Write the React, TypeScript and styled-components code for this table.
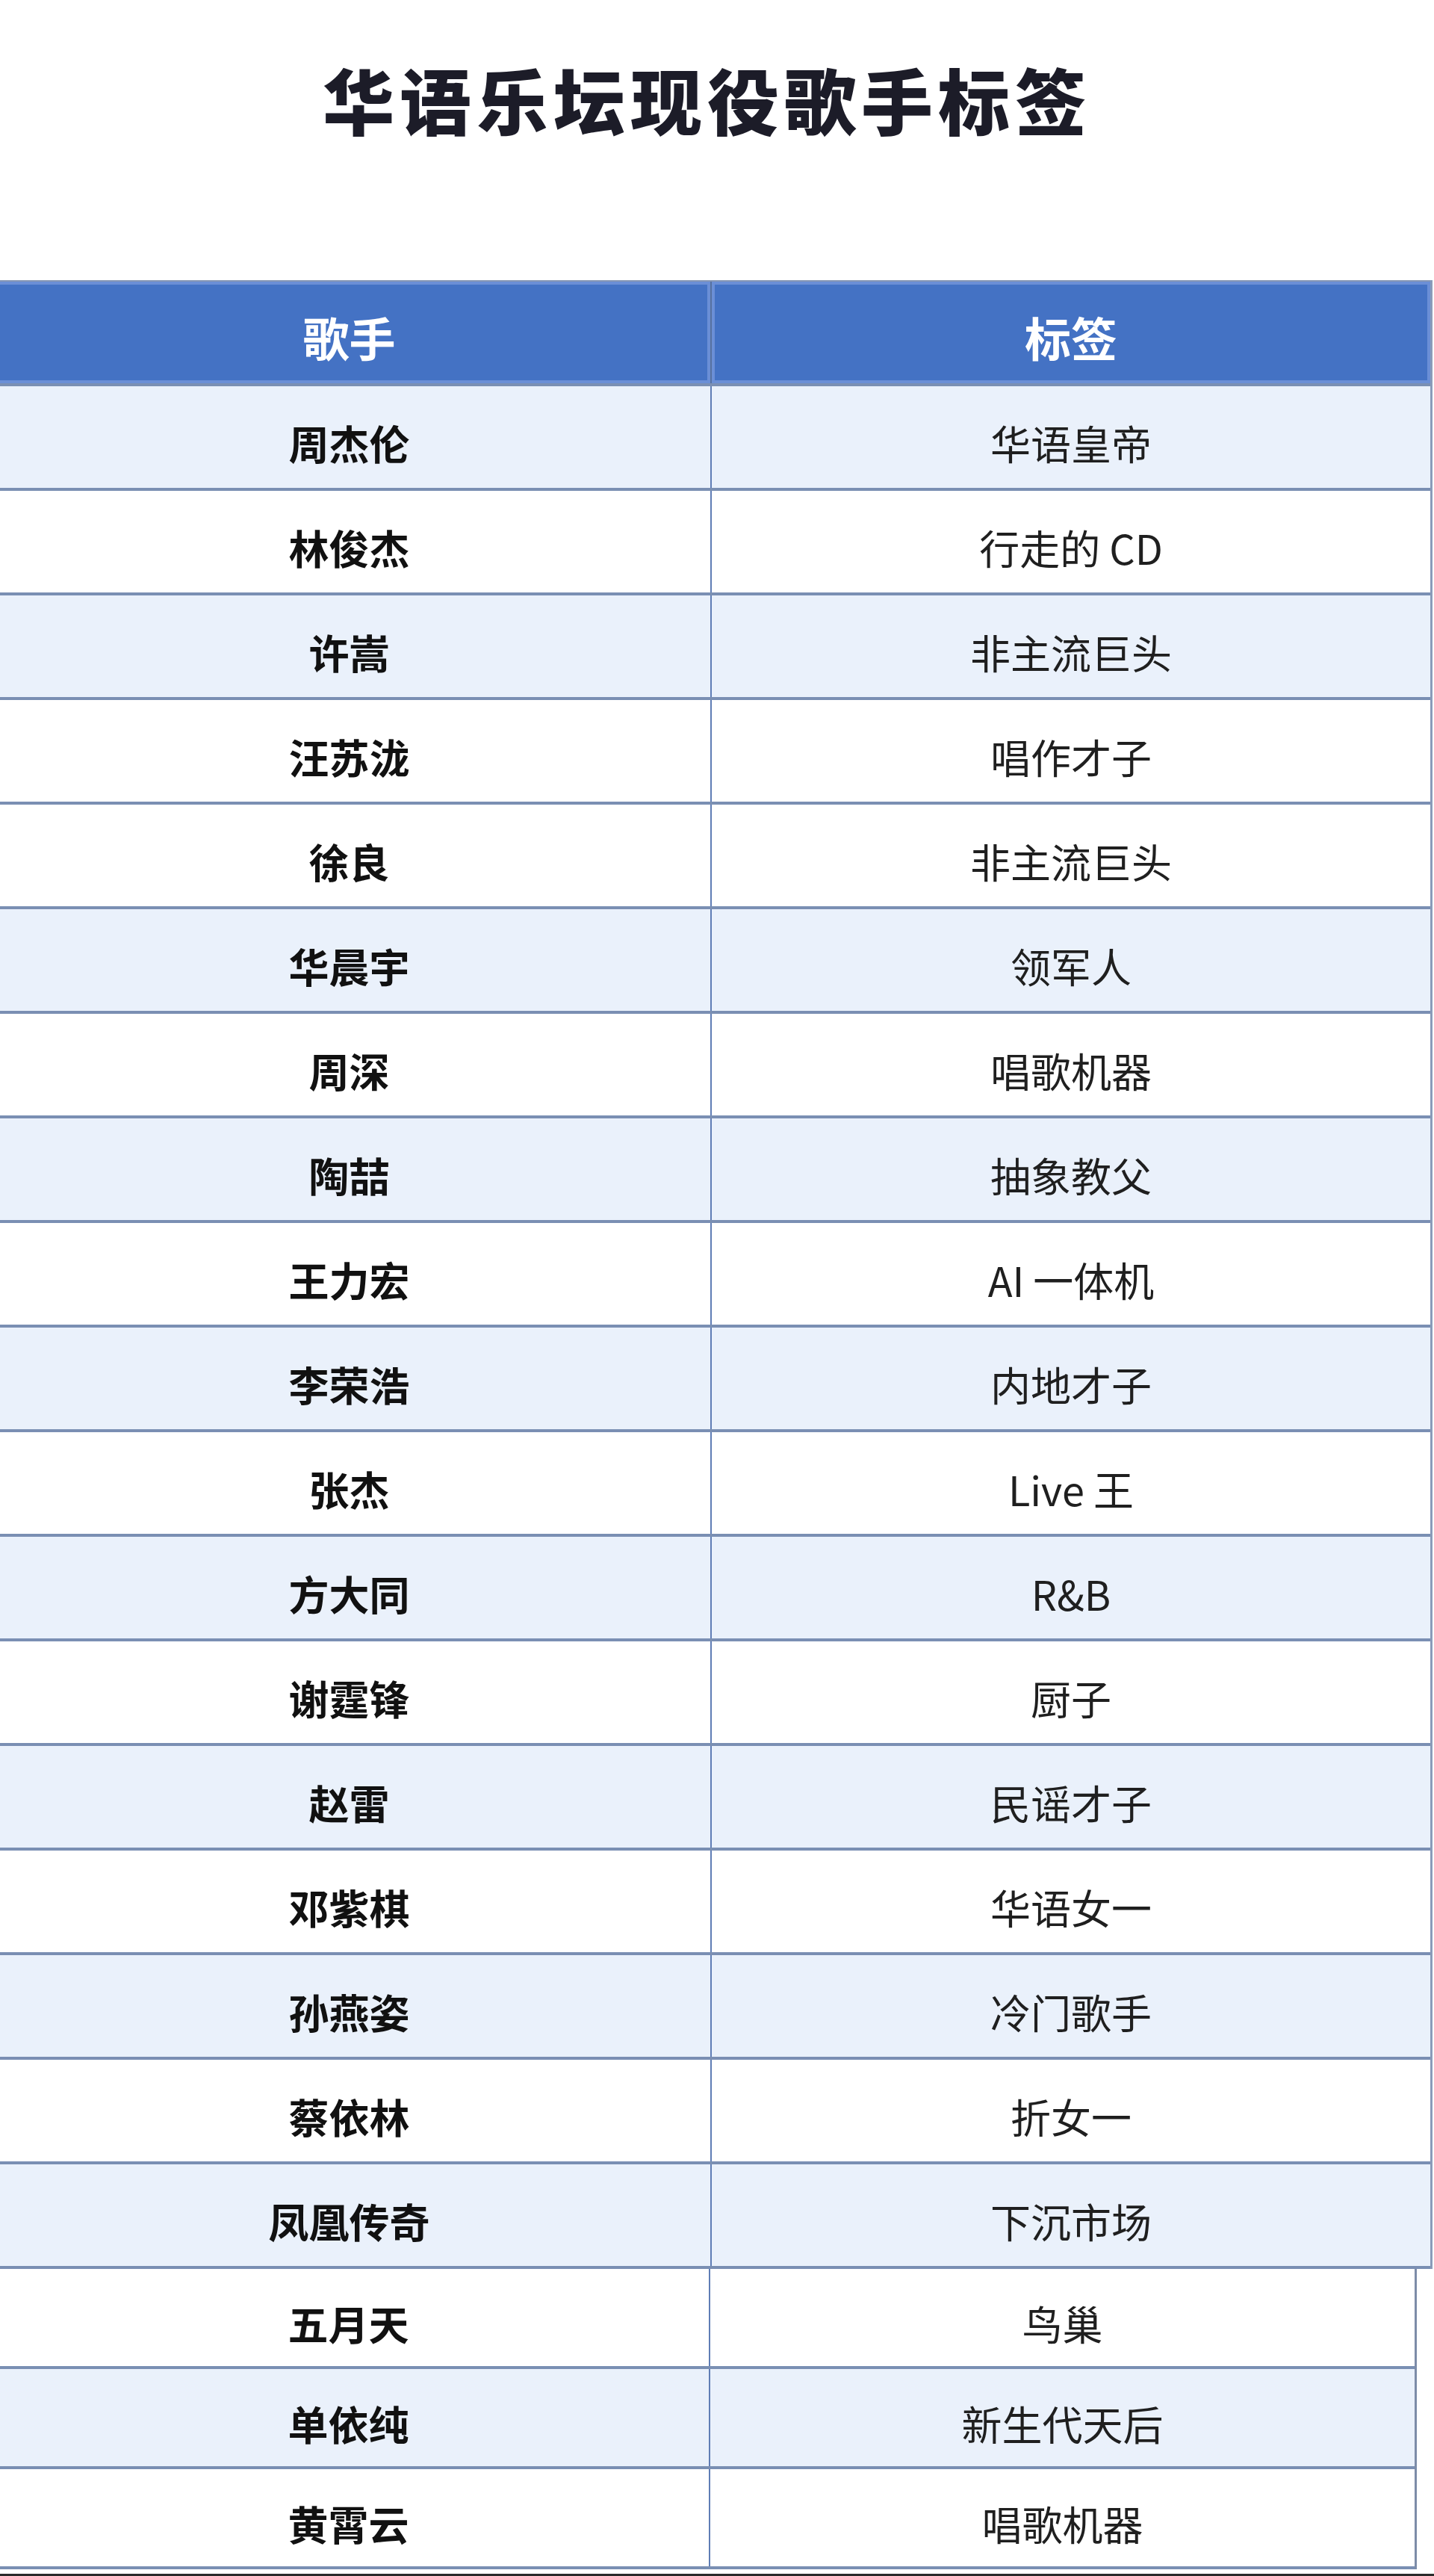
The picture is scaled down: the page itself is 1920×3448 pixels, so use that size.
import React from 'react';
import styled, { createGlobalStyle } from 'styled-components';

const GlobalStyle = createGlobalStyle`
  html, body {
    margin: 0;
    padding: 0;
    background: #fff;
  }
  body {
    width: 1920px;
    overflow-x: hidden;
    font-family: "Noto Sans CJK SC", "Noto Sans", sans-serif;
  }
`;

const Page = styled.div`
  width: 1920px;
  height: 3448px;
  overflow: hidden;
  background: #fff;
  display: flex;
  flex-direction: column;
`;

// the sheet is a little wider than the screen and pushed left, as in the shot
const Sheet = styled.div`
  margin-left: -16px;
  width: 1934px;
  display: flex;
  flex-direction: column;
`;

const Title = styled.h1`
  margin: 0;
  height: 375px;
  box-sizing: border-box;
  padding: 72px 8px 0 0;
  text-align: center;
  font-size: 96px;
  line-height: 120px;
  font-weight: 900;
  letter-spacing: 7px;
  color: #1c1c28;
`;

const Table = styled.div<{ $width: number; $last?: boolean }>`
  width: ${(p) => p.$width}px;
  display: flex;
  flex-direction: column;
  border-right: 3px solid ${(p) => (p.$last ? '#7d8ca8' : '#8a9bb9')};
  box-sizing: border-box;
`;

const Row = styled.div<{ $shade?: boolean; $height: number; $cols: string }>`
  display: grid;
  grid-template-columns: ${(p) => p.$cols};
  height: ${(p) => p.$height}px;
  box-sizing: border-box;
  background: ${(p) => (p.$shade ? '#eaf1fb' : '#ffffff')};
  border-bottom: 4px solid #7a8fb3;
`;

const HeadRow = styled.div<{ $cols: string }>`
  display: grid;
  grid-template-columns: ${(p) => p.$cols};
  height: 142px;
  box-sizing: border-box;
  background: #4472c4;
  border-top: 2px solid #8596b5;
  border-bottom: 4px solid #7a8fb3;
`;

const HeadCell = styled.div`
  display: flex;
  align-items: center;
  justify-content: center;
  padding-top: 12px;
  box-sizing: border-box;
  box-shadow: inset 0 0 0 4px #6b8fd6;
  color: #fff;
  font-size: 62px;
  font-weight: 700;
  & + & {
    border-left: 2px solid #56719f;
  }
`;

const Cell = styled.div<{ $bold?: boolean }>`
  display: flex;
  align-items: center;
  justify-content: center;
  padding-top: 14px;
  box-sizing: border-box;
  font-size: 54px;
  font-weight: ${(p) => (p.$bold ? 700 : 400)};
  color: ${(p) => (p.$bold ? '#111' : '#1f1f1f')};
  white-space: nowrap;
  & + & {
    border-left: 2px solid #5f7db5;
  }
`;

const BottomLine = styled.div`
  margin-top: 6px;
  height: 4px;
  background: #2a2a2a;
`;

type Singer = { name: string; tag: string; shade: boolean };

const mainRows: Singer[] = [
  { name: '周杰伦', tag: '华语皇帝', shade: true },
  { name: '林俊杰', tag: '行走的 CD', shade: false },
  { name: '许嵩', tag: '非主流巨头', shade: true },
  { name: '汪苏泷', tag: '唱作才子', shade: false },
  { name: '徐良', tag: '非主流巨头', shade: false },
  { name: '华晨宇', tag: '领军人', shade: true },
  { name: '周深', tag: '唱歌机器', shade: false },
  { name: '陶喆', tag: '抽象教父', shade: true },
  { name: '王力宏', tag: 'AI 一体机', shade: false },
  { name: '李荣浩', tag: '内地才子', shade: true },
  { name: '张杰', tag: 'Live 王', shade: false },
  { name: '方大同', tag: 'R&B', shade: true },
  { name: '谢霆锋', tag: '厨子', shade: false },
  { name: '赵雷', tag: '民谣才子', shade: true },
  { name: '邓紫棋', tag: '华语女一', shade: false },
  { name: '孙燕姿', tag: '冷门歌手', shade: true },
  { name: '蔡依林', tag: '折女一', shade: false },
  { name: '凤凰传奇', tag: '下沉市场', shade: true },
];

const extraRows: Singer[] = [
  { name: '五月天', tag: '鸟巢', shade: false },
  { name: '单依纯', tag: '新生代天后', shade: true },
  { name: '黄霄云', tag: '唱歌机器', shade: false },
];

const mainCols = '967px 1fr';
const extraCols = '965px 1fr';

const App: React.FC = () => {
  return (
    <Page>
      <GlobalStyle />
      <Sheet>
        <Title>华语乐坛现役歌手标签</Title>
        <Table $width={1934}>
          <HeadRow $cols={mainCols}>
            <HeadCell>歌手</HeadCell>
            <HeadCell>标签</HeadCell>
          </HeadRow>
          {mainRows.map((r) => (
            <Row key={r.name} $shade={r.shade} $height={140} $cols={mainCols}>
              <Cell $bold>{r.name}</Cell>
              <Cell>{r.tag}</Cell>
            </Row>
          ))}
        </Table>
        <Table $width={1913} $last>
          {extraRows.map((r) => (
            <Row key={r.name} $shade={r.shade} $height={134} $cols={extraCols}>
              <Cell $bold>{r.name}</Cell>
              <Cell>{r.tag}</Cell>
            </Row>
          ))}
        </Table>
      </Sheet>
      <BottomLine />
    </Page>
  );
};

export default App;
